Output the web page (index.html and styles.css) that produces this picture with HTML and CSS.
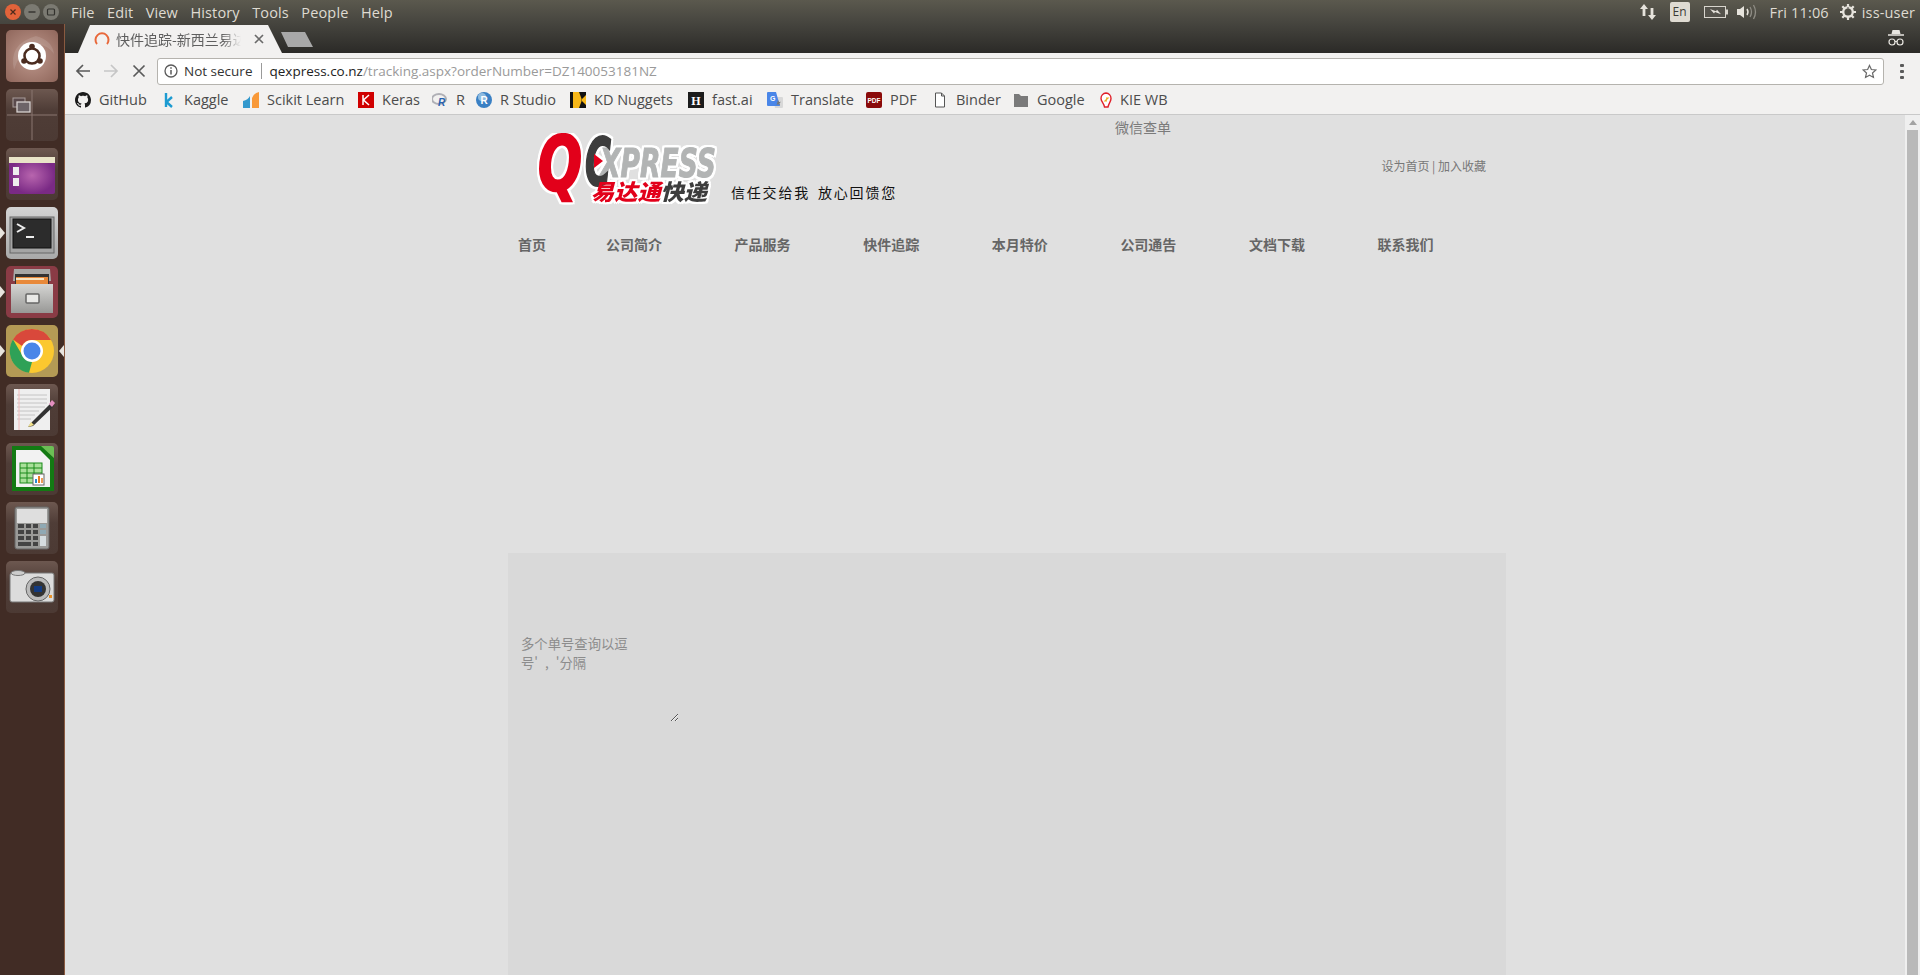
FILE: index.html
```html
<!DOCTYPE html>
<html lang="zh">
<head>
<meta charset="utf-8">
<title>快件追踪-新西兰易达通快递</title>
<link rel="stylesheet" href="styles.css">
</head>
<body>
<header class="menubar">
  <div class="winbtns">
    <span class="winbtn close"><svg viewBox="0 0 16 16" width="16" height="16"><path d="M5.500 5.500l5 5M10.500 5.500l-5 5" stroke="#4a2a1c" stroke-width="1.200"/></svg></span>
    <span class="winbtn"><svg viewBox="0 0 16 16" width="16" height="16"><path d="M4.500 8h7" stroke="#33322e" stroke-width="1.400"/></svg></span>
    <span class="winbtn"><svg viewBox="0 0 16 16" width="16" height="16"><rect x="4.500" y="5" width="7" height="6" rx="1" fill="none" stroke="#33322e" stroke-width="1.200"/></svg></span>
  </div>
  <nav class="appmenu"><span>File</span><span>Edit</span><span>View</span><span>History</span><span>Tools</span><span>People</span><span>Help</span></nav>
  <div class="indicators">
    <svg class="ind-net" viewBox="0 0 18 18" width="18" height="18"><path d="M5 1L1 6h2.600v7h2.800V6H9zM13 17l4-5h-2.600V5h-2.800v7H9z" fill="#e6e3dc"/></svg>
    <span class="ind-en">En</span>
    <svg class="ind-bat" viewBox="0 0 24 12" width="24" height="12"><rect x=".5" y=".5" width="21" height="11" fill="#55534c" stroke="#d8d5cd"/><rect x="22" y="3.500" width="2" height="5" fill="#d8d5cd"/><path d="M6 3l6 2.200 1-1.500 4 4.500-6-2.200-1 1.500z" fill="#e6e3dc"/></svg>
    <svg class="ind-vol" viewBox="0 0 20 16" width="20" height="16"><path d="M0 5h3l4-3v12l-4-3H0z" fill="#e6e3dc"/><path d="M10 5q2 3 0 6" fill="none" stroke="#e6e3dc" stroke-width="1.500"/><path d="M13 3q3 5 0 10M16.500 1q4 7 0 14" fill="none" stroke="#8f8d85" stroke-width="1.300"/></svg>
    <span class="ind-time">Fri 11:06</span>
    <svg class="ind-gear" viewBox="0 0 16 16" width="16" height="16"><circle cx="8" cy="8" r="4.800" fill="none" stroke="#e6e3dc" stroke-width="2.400"/><path d="M8 0v3M8 13v3M0 8h3M13 8h3M2.300 2.300l2.100 2.100M11.600 11.600l2.100 2.100M13.700 2.300l-2.100 2.100M4.400 11.600l-2.100 2.100" stroke="#e6e3dc" stroke-width="2.200"/><path d="M8 3v5" stroke="#4e4d46" stroke-width="1"/></svg>
    <span class="ind-user">iss-user</span>
  </div>
</header>

<div class="desktop">
  <aside class="launcher">
    <div class="tile t-dash"><svg viewBox="0 0 52 52" width="52" height="52"><path d="M8 40Q2 14 30 6q16 4 18 18-10-14-26-6-10 8-14 22z" fill="#fff" opacity=".12"/><circle cx="26" cy="26" r="14" fill="#fff"/><circle cx="26" cy="26" r="7.500" fill="none" stroke="#4b2c20" stroke-width="2.600"/><circle cx="26" cy="16.500" r="2.800" fill="#4b2c20"/><circle cx="18" cy="31" r="2.800" fill="#4b2c20"/><circle cx="34" cy="31" r="2.800" fill="#4b2c20"/></svg></div>
    <div class="tile t-dark"><svg viewBox="0 0 52 52" width="52" height="52"><path d="M26 1v50M1 26h50" stroke="#8a7770" stroke-width="1"/><rect x="7" y="9" width="12" height="9" fill="#5a4a4c" stroke="#a89c9a"/><rect x="11" y="13" width="13" height="10" fill="#6d6468" stroke="#d8d2d0" stroke-width="1.300"/></svg></div>
    <div class="tile t-dark"><svg viewBox="0 0 52 52" width="52" height="52"><defs><radialGradient id="pg"><stop offset="0" stop-color="#b865ae"/><stop offset="1" stop-color="#7a2a85"/></radialGradient></defs><rect x="3" y="9" width="46" height="37" rx="2" fill="url(#pg)"/><rect x="3" y="9" width="46" height="6" fill="#e9e4c8"/><rect x="7" y="19" width="6" height="8" fill="#eee"/><rect x="7" y="30" width="6" height="8" fill="#eee"/></svg></div>
    <div class="tile t-term pip"><svg viewBox="0 0 52 52" width="52" height="52"><rect x="4" y="10" width="44" height="36" fill="#a5a5a5" stroke="#666"/><rect x="7" y="12" width="38" height="29" fill="#2c2c2c" stroke="#111"/><path d="M11 17l7 4-7 4" fill="none" stroke="#eee" stroke-width="2"/><path d="M20 30h8" stroke="#eee" stroke-width="2"/></svg></div>
    <div class="tile t-files pip"><svg viewBox="0 0 52 52" width="52" height="52"><defs><linearGradient id="cab" x1="0" y1="0" x2="0" y2="1"><stop offset="0" stop-color="#d5d5d3"/><stop offset="1" stop-color="#989896"/></linearGradient></defs><path d="M8 3h36l1 12H7z" fill="#a8a8a6"/><rect x="9" y="8" width="34" height="11" fill="#333"/><rect x="10" y="11" width="32" height="7" fill="#e8893a"/><rect x="10" y="12" width="28" height="2" fill="#f6e3c0"/><path d="M5 18h42v29H5z" fill="url(#cab)"/><rect x="20" y="28" width="13" height="9" rx="1" fill="#e8e8e6" stroke="#666" stroke-width="1.500"/></svg></div>
    <div class="tile t-chrome pip pip-both"><svg viewBox="0 0 52 52" width="52" height="52"><circle cx="26" cy="26" r="22" fill="#fbc82f"/><path d="M26 4a22 22 0 0 1 19 11H26a11 11 0 0 0-10 6L7 14.500A22 22 0 0 1 26 4z" fill="#d9483b"/><path d="M7 14.500l10 17 9 5.500-3 10.800A22 22 0 0 1 7 14.500z" fill="#2fa157"/><circle cx="26" cy="26" r="11" fill="#fff"/><circle cx="26" cy="26" r="8.500" fill="#4a86e8"/></svg></div>
    <div class="tile t-dark"><svg viewBox="0 0 52 52" width="52" height="52"><rect x="8" y="5" width="36" height="41" fill="#efefef"/><path d="M11 11h30M11 15h30M11 19h30M11 23h28M11 27h22M11 31h18M11 35h14" stroke="#c4c4c4"/><path d="M13 5v41" stroke="#f0b8b8"/><path d="M25 39l20-20 3 3-21 20-5 1z" fill="#333"/><path d="M43 20l3-4 3 3-3 4z" fill="#e48fc0"/><path d="M22 43l3-5 3 3z" fill="#f3e28a"/></svg></div>
    <div class="tile t-dark"><svg viewBox="0 0 52 52" width="52" height="52"><path d="M6 3h30l12 12v33H6z" fill="#137a13"/><path d="M10 7h24l10 10v27H10z" fill="#f2f2f2"/><path d="M35 3h11a2 2 0 0 1 2 2v10z" fill="#6cbf55"/><rect x="14" y="20" width="22" height="20" fill="#a9e09a" stroke="#1a8a1a"/><path d="M14 25h22M14 30h22M14 35h22M21 20v20M28 20v20" stroke="#1a8a1a"/><rect x="27" y="31" width="11" height="11" fill="#fff" stroke="#666"/><path d="M30 40v-4" stroke="#2a8ad0" stroke-width="2"/><path d="M33 40v-7" stroke="#e87b22" stroke-width="2"/><path d="M36 40v-5" stroke="#e87b22" stroke-width="1.500"/></svg></div>
    <div class="tile t-dark"><svg viewBox="0 0 52 52" width="52" height="52"><rect x="9" y="5" width="34" height="42" rx="2" fill="#9a9a98" stroke="#666"/><rect x="11" y="7" width="30" height="14" fill="#dedede"/><g fill="#444"><rect x="12" y="22" width="6" height="4"/><rect x="20" y="22" width="5" height="4"/><rect x="27" y="22" width="5" height="4"/><rect x="12" y="28" width="6" height="4"/><rect x="20" y="28" width="5" height="4"/><rect x="27" y="28" width="5" height="4"/><rect x="12" y="34" width="6" height="4"/><rect x="20" y="34" width="5" height="4"/><rect x="27" y="34" width="5" height="4"/><rect x="12" y="40" width="13" height="4"/><rect x="27" y="40" width="5" height="4"/></g><rect x="34" y="22" width="6" height="4" fill="#8fa9b4"/><rect x="34" y="28" width="6" height="4" fill="#8fa9b4"/><rect x="34" y="34" width="6" height="10" fill="#d5dde0"/></svg></div>
    <div class="tile t-dark"><svg viewBox="0 0 52 52" width="52" height="52"><rect x="4" y="12" width="44" height="29" rx="2" fill="#dcdcdc" stroke="#777"/><ellipse cx="12" cy="12" rx="7" ry="2.500" fill="#ccc" stroke="#777"/><circle cx="32" cy="28" r="12" fill="#bbb" stroke="#666"/><circle cx="32" cy="28" r="8" fill="#333"/><rect x="28" y="25" width="8" height="6" fill="#123a80"/><rect x="43" y="34" width="3" height="3" fill="#e8922a"/></svg></div>
  </aside>

  <div class="browser">
    <div class="tabstrip">
      <div class="tab">
        <svg class="spinner" viewBox="0 0 16 16" width="16" height="16"><path d="M3 13A6.500 6.500 0 1 1 13 13" fill="none" stroke="#e8683a" stroke-width="2"/></svg>
        <span class="tab-title">快件追踪-新西兰易达通快递</span>
        <svg class="tab-x" viewBox="0 0 10 10" width="10" height="10"><path d="M1 1l8 8M9 1l-8 8" stroke="#6a6a6a" stroke-width="1.700"/></svg>
      </div>
      <div class="newtab"></div>
      <svg class="incog" viewBox="0 0 18 18" width="18" height="18"><path d="M5.500 1h7l1 4h-9z" fill="#e8e6e1"/><path d="M1 6h16" stroke="#e8e6e1" stroke-width="1.500"/><circle cx="5" cy="13" r="3" fill="none" stroke="#e8e6e1" stroke-width="1.200"/><circle cx="13" cy="13" r="3" fill="none" stroke="#e8e6e1" stroke-width="1.200"/><path d="M8 12.500h2" stroke="#e8e6e1"/></svg>
    </div>

    <div class="toolbar">
      <svg class="nav-ic" viewBox="0 0 16 16" width="16" height="16"><path d="M15 8H2M8 2L2 8l6 6" fill="none" stroke="#5a5a5a" stroke-width="1.700"/></svg>
      <svg class="nav-ic" viewBox="0 0 16 16" width="16" height="16"><path d="M1 8h13M8 2l6 6-6 6" fill="none" stroke="#c6c6c6" stroke-width="1.700"/></svg>
      <svg class="nav-ic" viewBox="0 0 16 16" width="16" height="16"><path d="M2.500 2.500l11 11M13.500 2.500l-11 11" stroke="#5a5a5a" stroke-width="1.700"/></svg>
      <div class="omnibox">
        <svg class="info" viewBox="0 0 14 14" width="14" height="14"><circle cx="7" cy="7" r="6" fill="none" stroke="#5a5a5a" stroke-width="1.300"/><path d="M7 6v4.500" stroke="#5a5a5a" stroke-width="1.500"/><path d="M7 3.200v1.600" stroke="#5a5a5a" stroke-width="1.500"/></svg>
        <span class="secure">Not secure</span>
        <span class="omni-sep"></span>
        <span class="url"><b>qexpress.co.nz</b>/tracking.aspx?orderNumber=DZ140053181NZ</span>
        <svg class="star" viewBox="0 0 16 16" width="15" height="15"><path d="M8 1.500l2 4.400 4.800.5-3.600 3.200 1 4.700L8 11.900 3.800 14.300l1-4.700L1.200 6.400 6 5.900z" fill="none" stroke="#6a6a6a" stroke-width="1.300"/></svg>
      </div>
      <div class="kebab"><i></i><i></i><i></i></div>
    </div>

    <div class="bookmarks">
      <span class="bm b-github"><svg viewBox="0 0 16 16" width="16" height="16"><path fill="#1b1b1b" d="M8 0C3.580 0 0 3.580 0 8c0 3.540 2.290 6.530 5.470 7.590.4.070.55-.17.55-.38 0-.19-.01-.82-.01-1.490-2.010.37-2.530-.49-2.690-.94-.09-.23-.48-.94-.82-1.130-.28-.15-.68-.52-.01-.53.630-.01 1.080.58 1.230.82.720 1.210 1.870.87 2.330.66.070-.52.280-.87.510-1.070-1.780-.2-3.640-.89-3.640-3.950 0-.87.310-1.590.82-2.150-.08-.2-.36-1.020.08-2.120 0 0 .67-.21 2.200.82.640-.18 1.320-.27 2-.27s1.360.09 2 .27c1.530-1.040 2.200-.82 2.200-.82.440 1.100.160 1.920.08 2.120.510.560.820 1.270.820 2.150 0 3.070-1.870 3.750-3.650 3.950.290.250.540.730.540 1.480 0 1.070-.01 1.930-.01 2.200 0 .210.150.460.550.380A8.010 8.010 0 0 0 16 8c0-4.420-3.580-8-8-8z"/></svg><span>GitHub</span></span>
      <span class="bm b-kaggle"><svg viewBox="0 0 16 16" width="16" height="16"><path d="M6 1v14M12 5L6.500 10 12 15" fill="none" stroke="#1d9bd1" stroke-width="2.400"/></svg><span>Kaggle</span></span>
      <span class="bm b-scikit"><svg viewBox="0 0 16 16" width="16" height="16"><path d="M0 9q5-1 7-5v12H0z" fill="#3499cd"/><path d="M9 16V6q2-5 7-6v16z" fill="#f89939"/></svg><span>Scikit Learn</span></span>
      <span class="bm b-keras"><svg viewBox="0 0 16 16" width="16" height="16"><rect width="16" height="16" fill="#d00000"/><path d="M5 3v10M11 3L5.500 8l5.500 5" fill="none" stroke="#fff" stroke-width="1.500"/></svg><span>Keras</span></span>
      <span class="bm b-r"><svg viewBox="0 0 16 16" width="16" height="16"><ellipse cx="7" cy="7" rx="7" ry="5" fill="none" stroke="#b0b0b6" stroke-width="2"/><text x="6" y="14" class="ic-r">R</text></svg><span>R</span></span>
      <span class="bm b-rstudio"><svg viewBox="0 0 16 16" width="16" height="16"><circle cx="8" cy="8" r="8" fill="#3a80c4"/><circle cx="6" cy="5" r="4" fill="#8fbbe0"/><text x="4.500" y="12" class="ic-rs">R</text></svg><span>R Studio</span></span>
      <span class="bm b-kd"><svg viewBox="0 0 16 16" width="16" height="16"><rect width="16" height="16" fill="#f7b718"/><path d="M0 0h3v16H0zM9 0h7v3l-5 5 5 5v3H9l3-8z" fill="#111"/></svg><span>KD Nuggets</span></span>
      <span class="bm b-fast"><svg viewBox="0 0 16 16" width="16" height="16"><rect width="16" height="16" fill="#1c1c1c"/><text x="8" y="12.500" class="ic-h">H</text></svg><span>fast.ai</span></span>
      <span class="bm b-trans"><svg viewBox="0 0 16 16" width="16" height="16"><path d="M6 5h9q1 0 1 1v9q0 1-1 1H8z" fill="#d8d8d8"/><path d="M1 0h8l4 14H1q-1 0-1-1V1q0-1 1-1z" fill="#4a86e8"/><text x="3" y="9" class="ic-g">G</text><path d="M11 8l1 2 2-.2-1.500 1.500.5 2-2-1-1.500 1z" fill="#777"/></svg><span>Translate</span></span>
      <span class="bm b-pdf"><svg viewBox="0 0 16 16" width="16" height="16"><rect width="16" height="16" rx="2" fill="#8a0a0a"/><text x="8" y="11" class="ic-pdf">PDF</text></svg><span>PDF</span></span>
      <span class="bm b-binder"><svg viewBox="0 0 16 16" width="16" height="16"><path d="M3.500 1h6l3 3v11h-9zM9.500 1v3h3" fill="#fff" stroke="#555"/></svg><span>Binder</span></span>
      <span class="bm b-google"><svg viewBox="0 0 16 16" width="16" height="16"><path d="M1 2h5l2 2h7v11H1z" fill="#7a7a7a"/></svg><span>Google</span></span>
      <span class="bm b-kie"><svg viewBox="0 0 16 16" width="16" height="16"><path d="M8 1a5.500 5.500 0 0 1 5 5.500c0 3-2 4-3 8.500H6.500C6 11 3 9.500 3 6.500A5.500 5.500 0 0 1 8 1z" fill="#fff" stroke="#e0202a" stroke-width="1.400"/><path d="M8 6h2l-3 3h2" fill="none" stroke="#e8b020" stroke-width="1.200"/></svg><span>KIE WB</span></span>
    </div>

    <div class="viewport">
      <main class="page">
        <div class="wechat">微信查单</div>
        <div class="brand">
          <svg class="logo" viewBox="0 0 190 76" width="190" height="76">
            <g class="lg-outline">
              <text x="8" y="57" class="lg-q red" textLength="44" lengthAdjust="spacingAndGlyphs">Q</text>
              <text x="70" y="44" class="lg-x gray" textLength="116" lengthAdjust="spacingAndGlyphs">XPRESS</text>
              <text x="55" y="52" class="lg-c dark" textLength="26" lengthAdjust="spacingAndGlyphs">C</text>
              <path d="M64 21l9 7-9 7z" fill="#e2001a"/>
              <text x="61" y="67" class="lg-cn" textLength="116" lengthAdjust="spacingAndGlyphs"><tspan class="red">易达通</tspan><tspan class="dark">快递</tspan></text>
            </g>
          </svg>
          <div class="slogan"><span>信任交给我</span><span>放心回馈您</span></div>
          <div class="sitelinks">设为首页 | 加入收藏</div>
        </div>
        <nav class="mainnav"><a>首页</a><a>公司简介</a><a>产品服务</a><a>快件追踪</a><a>本月特价</a><a>公司通告</a><a>文档下载</a><a>联系我们</a></nav>
        <section class="panel">
          <textarea class="numbers" placeholder="多个单号查询以逗号' , '分隔"></textarea>
        </section>
      </main>
      <div class="scrollbar"><span class="sb-up"></span><span class="sb-thumb"></span></div>
    </div>
  </div>
</div>
</body>
</html>
```
FILE: styles.css
```css
* { box-sizing: border-box; }
html, body { margin: 0; height: 100%; overflow: hidden; }
body {
  display: flex;
  flex-direction: column;
  height: 975px;
  font-family: "Open Sans", "Noto Sans CJK SC", sans-serif;
  background: #e0e0e0;
}

/* top system bar */
.menubar {
  height: 24px;
  flex: none;
  display: flex;
  align-items: center;
  background: linear-gradient(#5b594e, #45443e);
  color: #dfdbd2;
  font-size: 14.500px;
  letter-spacing: .15px;
}
.winbtns { display: flex; gap: 3px; margin-left: 5px; width: 66px; }
.winbtn {
  width: 16px;
  height: 16px;
  border-radius: 50%;
  background: #7b7a72;
  display: block;
}
.winbtn svg { display: block; }
.winbtn.close { background: #e2633a; }
.appmenu { display: flex; gap: 12.400px; }
.indicators { margin-left: auto; display: flex; align-items: center; padding-right: 5px; }
.ind-net { margin-right: 13px; }
.ind-en {
  width: 20px;
  height: 20px;
  border-radius: 2px;
  background: #dfdbd2;
  color: #3c3b37;
  font-size: 12px;
  text-align: center;
  line-height: 20px;
  margin-right: 14px;
}
.ind-bat { margin-right: 9px; }
.ind-vol { margin-right: 13px; }
.ind-time { margin-right: 11px; }
.ind-gear { margin-right: 6px; }

.desktop { flex: 1; display: flex; min-height: 0; }

/* launcher */
.launcher {
  width: 65px;
  flex: none;
  background: #412c25;
  border-right: 1px solid #8a5a40;
  padding: 6px 6px 0;
  display: flex;
  flex-direction: column;
  gap: 7px;
}
.tile {
  width: 52px;
  height: 52px;
  border-radius: 5px;
  position: relative;
  flex: none;
}
.tile svg { display: block; }
.t-dash { background: radial-gradient(circle at 50% 50%, #c09a8e, #8f665b); }
.t-dark { background: linear-gradient(#6d5850, #4f3d37 40%, #4c3a34); }
.t-term { background: linear-gradient(#d4d4d4, #a9a9a9); }
.t-files { background: #8a3b45; }
.t-chrome { background: #b49a55; }
.pip::before {
  content: "";
  position: absolute;
  left: -6px;
  top: 20px;
  border: 6px solid transparent;
  border-left: 5px solid #e8e4de;
  border-right: 0;
}
.pip-both::after {
  content: "";
  position: absolute;
  right: -6px;
  top: 20px;
  border: 6px solid transparent;
  border-right: 5px solid #e8e4de;
  border-left: 0;
}

.browser { flex: 1; min-width: 0; display: flex; flex-direction: column; }

/* tabs */
.tabstrip {
  height: 29px;
  flex: none;
  display: flex;
  align-items: flex-end;
  background: linear-gradient(#45443e, #2b2a27);
  position: relative;
  padding-left: 13px;
}
.tab {
  width: 204px;
  height: 28px;
  background: #f2f1f0;
  clip-path: polygon(0 100%, 12px 0, 190px 0, 204px 100%);
  display: flex;
  align-items: center;
  padding: 0 18px 0 16px;
  gap: 6px;
}
.spinner { flex: none; }
.tab-title {
  width: 130px;
  overflow: hidden;
  white-space: nowrap;
  font-size: 14px;
  color: #5f5f5f;
  font-family: "Noto Sans CJK SC", sans-serif;
  -webkit-mask-image: linear-gradient(90deg, #000 85%, transparent);
  mask-image: linear-gradient(90deg, #000 85%, transparent);
}
.tab-x { margin-left: 7px; flex: none; }
.newtab {
  width: 32px;
  height: 15px;
  margin: 0 0 6px -1px;
  background: #a8a8a8;
  clip-path: polygon(0 0, 24px 0, 32px 100%, 7px 100%);
}
.incog { position: absolute; right: 15px; top: 5px; }

/* toolbar */
.toolbar {
  height: 32px;
  flex: none;
  background: #f2f1f0;
  display: flex;
  align-items: center;
  padding: 4px 0 0 10px;
  font-size: 13.500px;
}
.nav-ic { margin-right: 12px; flex: none; }
.omnibox {
  margin-left: -2px;
  width: 1727px;
  height: 27px;
  background: #fff;
  border: 1px solid #b5b3ae;
  border-radius: 3px;
  display: flex;
  align-items: center;
  padding: 0 6px;
}
.info { margin-right: 6px; flex: none; }
.secure { color: #333; }
.omni-sep { width: 1px; height: 16px; background: #9a9a9a; margin: 0 7px 0 9px; }
.url { color: #9a9a9a; flex: 1; }
.url b { font-weight: 400; color: #222; }
.kebab { width: 4px; margin-left: 16px; display: flex; flex-direction: column; gap: 3px; }
.kebab i { width: 4px; height: 3px; background: #5a5a5a; border-radius: 1px; display: block; }

/* bookmarks */
.bookmarks {
  height: 30px;
  flex: none;
  background: #f2f1f0;
  border-bottom: 1px solid #c9c9c9;
  display: flex;
  align-items: center;
  padding: 0 0 0 10px;
  font-size: 14.500px;
  color: #4c4c4c;
}
.bm { display: flex; align-items: center; gap: 8px; white-space: nowrap; }
.bm svg { flex: none; }
.b-github { width: 85px; }
.b-kaggle { width: 83px; }
.b-scikit { width: 115px; }
.b-keras { width: 74px; }
.b-r { width: 44px; }
.b-rstudio { width: 94px; }
.b-kd { width: 118px; }
.b-fast { width: 79px; }
.b-trans { width: 99px; }
.b-pdf { width: 66px; }
.b-binder { width: 81px; }
.b-google { width: 85px; }
.b-kie { gap: 6px; }
.ic-r { font: italic 700 10px "Liberation Sans", sans-serif; fill: #2a62b0; }
.ic-rs { font: 700 10px "Liberation Sans", sans-serif; fill: #fff; }
.ic-h { font: 700 12px "Liberation Serif", serif; fill: #fff; text-anchor: middle; }
.ic-g { font: 700 7px "Liberation Sans", sans-serif; fill: #fff; }
.ic-pdf { font: 700 6.500px "Liberation Sans", sans-serif; fill: #fff; text-anchor: middle; }

/* page */
.viewport { flex: 1; min-height: 0; display: flex; background: #e0e0e0; }
.page {
  flex: 1;
  min-width: 0;
  display: flex;
  flex-direction: column;
  padding-left: 443px;
  font-family: "Noto Sans CJK SC", sans-serif;
  color: #6a6a6a;
}
.wechat {
  font-size: 14px;
  line-height: 20px;
  height: 18px;
  width: 998px;
  padding: 2px 0 0 607px;
  color: #7b7b7b;
}
.brand { width: 998px; height: 76px; display: flex; align-items: flex-start; flex: none; }
.logo { margin-left: 22px; flex: none; }
.lg-outline {
  filter: drop-shadow(2px 0 0 #fff) drop-shadow(-2px 0 0 #fff) drop-shadow(0 2px 0 #fff) drop-shadow(0 -2px 0 #fff);
}
.lg-q, .lg-c, .lg-x { font-family: "DejaVu Sans", sans-serif; font-weight: 700; font-style: italic; }
.lg-q { font-size: 74px; }
.lg-c { font-size: 66px; }
.lg-x { font-size: 39px; }
.lg-cn { font-family: "Noto Sans CJK SC", sans-serif; font-weight: 900; font-size: 22px; font-style: italic; }
.red { fill: #e2001a; }
.dark { fill: #3d3d3d; }
.gray { fill: #b2b4b4; }
.lg-q.red { stroke: #e2001a; stroke-width: 2.500px; }
.lg-c.dark { stroke: #3d3d3d; stroke-width: 2px; }
.lg-x.gray { stroke: #b2b4b4; stroke-width: 1px; }
.slogan {
  margin: 48px 0 0 11px;
  display: flex;
  gap: 8px;
  font-size: 14px;
  letter-spacing: 1.800px;
  line-height: 22px;
  color: #111;
}
.sitelinks {
  margin-left: auto;
  margin-top: 24px;
  padding-right: 20px;
  font-size: 12px;
  line-height: 18px;
  color: #777;
}
.mainnav {
  display: flex;
  flex: none;
  height: 28px;
  margin-top: 21px;
  padding-left: 10px;
  font-size: 14px;
  font-weight: 700;
  line-height: 28px;
  color: #666;
}
.mainnav a { width: 128.600px; flex: none; }
.mainnav a:first-child { width: 88px; }
.panel {
  width: 998px;
  flex: 1;
  margin-top: 295px;
  padding: 79px 0 0 11px;
  background: #d9d9d9;
}
.numbers {
  display: block;
  width: 160px;
  height: 90px;
  padding: 2px 50px 2px 2px;
  background: transparent;
  border: 0;
  outline: 0;
  font-family: "Noto Sans CJK SC", sans-serif;
  font-size: 13.333px;
  line-height: 19px;
  word-spacing: 4px;
}
.numbers::placeholder { color: #8c8c8c; opacity: 1; }

/* scrollbar */
.scrollbar {
  width: 15px;
  flex: none;
  background: #efefef;
  display: flex;
  flex-direction: column;
  align-items: center;
}
.sb-up {
  margin-top: 5px;
  border: 4px solid transparent;
  border-top: 0;
  border-bottom: 5px solid #a3a3a3;
  width: 8px;
  height: 5px;
}
.sb-thumb { width: 11px; flex: 1; margin-top: 5px; background: #b9b9b9; }
```
